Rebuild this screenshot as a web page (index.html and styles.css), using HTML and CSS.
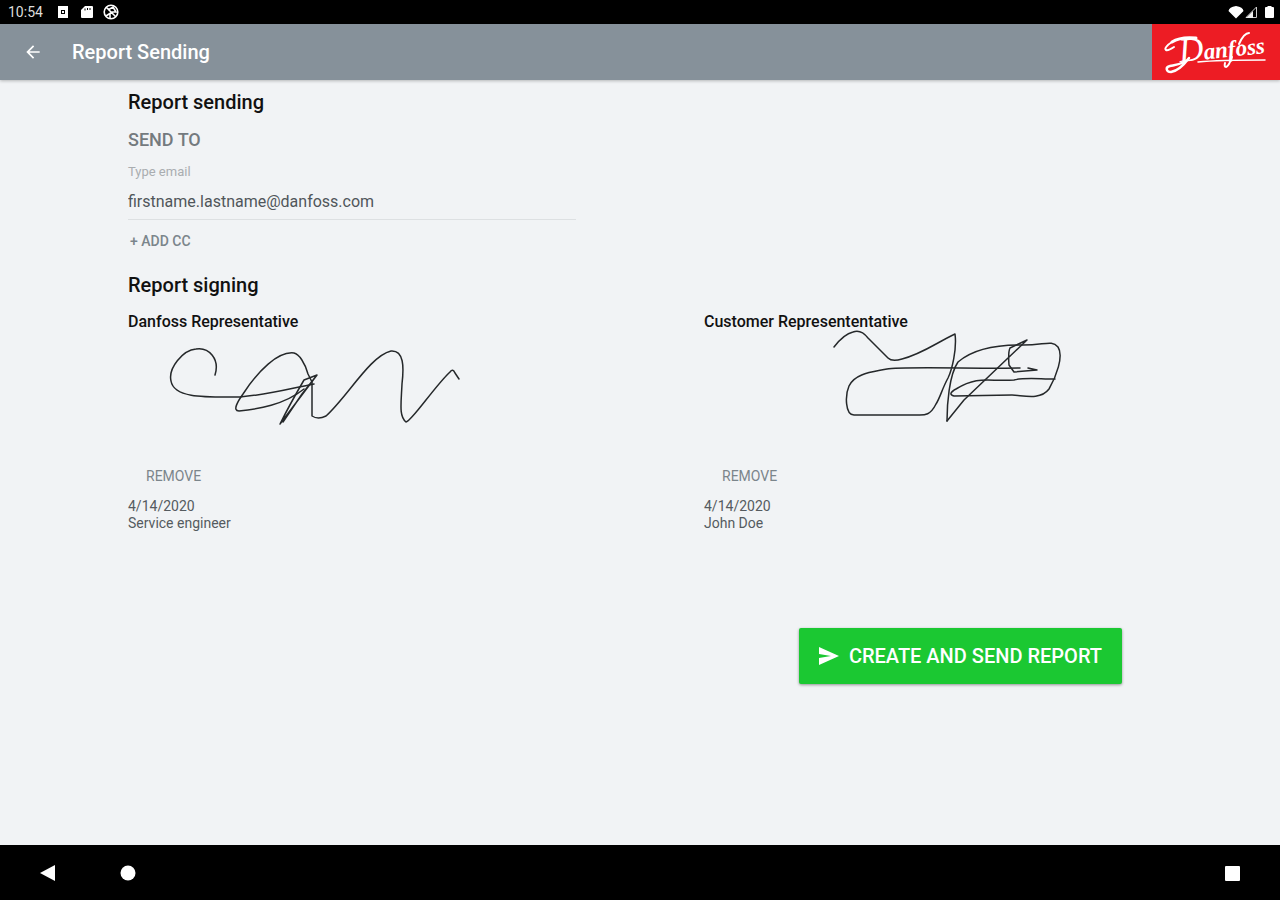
FILE: index.html
```html
<!DOCTYPE html>
<html lang="en">
<head>
<meta charset="utf-8">
<meta name="viewport" content="width=device-width, initial-scale=1">
<title>Report Sending</title>
<link rel="stylesheet" href="styles.css">
</head>
<body>
<div class="status-bar">
  <span class="clock">10:54</span>
  <svg class="status-icon" viewBox="0 0 16 16" aria-hidden="true"><path fill="#fff" fill-rule="evenodd" d="M3 2h10v12H3zM6 6v4h4V6z"/><path fill="#fff" d="M7 7h2v2H7z"/></svg>
  <svg class="status-icon" viewBox="0 0 16 16" aria-hidden="true"><path fill="#fff" fill-rule="evenodd" d="M6 2h7q1 0 1 1v10q0 1-1 1H3q-1 0-1-1V6zM5.500 4.500v2h1v-2zM8 4v2h1V4zM10.500 4v2h1V4z"/></svg>
  <svg class="status-icon" viewBox="0 0 16 16" aria-hidden="true"><g fill="none" stroke="#fff" stroke-width="1.600"><circle cx="8" cy="8" r="6.800"/><path d="M3 3l10 10M5 6l5-3 3 5-4 0-6 4M7 9v5"/></g></svg>
  <span class="spacer"></span>
  <svg class="signals" viewBox="0 0 48 16" aria-hidden="true"><path fill="#fff" d="M8 14.500L.5 7Q1 3 8 2q7 1 7.500 5zM38 3h1.500V2h4v1H45q1 0 1 1v9q0 1-1 1h-7q-1 0-1-1V4q0-1 1-1z"/><path fill="none" stroke="#ccc" d="M18 13.500L28.500 3v10.500z"/><path fill="#eee" d="M18 14l7-7v7z"/></svg>
</div>
<header class="app-bar">
  <button class="back" type="button" aria-label="Back"><svg viewBox="0 0 24 24" aria-hidden="true"><path fill="#fff" d="M20 11H7.830l5.590-5.590L12 4l-8 8 8 8 1.410-1.410L7.830 13H20z"/></svg></button>
  <h1 class="title">Report Sending</h1>
  <svg class="logo" viewBox="0 0 128 56" role="img" aria-label="Danfoss">
    <g fill="none" stroke="#fff" stroke-linecap="round">
      <path stroke-width="3" d="M20 18C26 14 34 13 44 14"/>
      <path stroke-width="2" d="M20 18c-5 3-8 7-6 8s5-1 8-3"/>
      <path stroke-width="2.500" d="M37 34C31 42 26 47 19 48c-5 0-6-5-1-6 5-1 8-1 14-4"/>
      <path stroke-width="1.500" d="M46 38c20-2 43-2 67-2"/>
      <path stroke-width="2" d="M97 9q-5 0-10 11M80 33q-3 9-6 10-2 0-1-4"/>
    </g>
    <text class="logo-text" x="28" y="38" transform="rotate(-6 28 38)"><tspan class="logo-initial">D</tspan>anfoss</text>
  </svg>
</header>
<main class="content">
  <section class="sending">
    <h2 class="heading">Report sending</h2>
    <h3 class="send-to">SEND TO</h3>
    <div class="columns">
      <div>
        <label class="field-label" for="email">Type email</label>
        <input class="field" id="email" type="email" value="firstname.lastname@danfoss.com">
        <button class="add-cc" type="button">+ ADD CC</button>
      </div>
    </div>
  </section>
  <section>
    <h2 class="heading">Report signing</h2>
    <div class="columns">
      <article>
        <h3 class="signer">Danfoss Representative</h3>
        <svg class="signature" viewBox="0 0 448 130" role="img" aria-label="Signature of Danfoss representative">
          <path d="M87 43C92 27 81 15 68 17C55 18 40 36 43 49C46 67 80 65 112 65C145 62 164 56 186 52"/>
          <path d="M176 57C156 73 130 77 111 79C104 79 110 69 115 62C130 39 150 19 166 21C171 22 177 31 180 42L184 50V84Q190 88 198 84C220 64 242 24 263 19C276 18 276 35 274 52C273 73 271 84 278 90C284 89 306 55 322 40Q325 36 327 41L331 47"/>
          <path d="M189 43L176 48Q162 72 152 92L189 43L174 62L155 90"/>
        </svg>
        <button class="remove" type="button">REMOVE</button>
        <p class="details">4/14/2020<br>Service engineer</p>
      </article>
      <article>
        <h3 class="signer">Customer Represententative</h3>
        <svg class="signature" viewBox="0 0 448 130" role="img" aria-label="Signature of customer representative">
          <path d="M130 15Q140 2 149 0Q157 -3 164 6L184 26Q188 30 198 27C218 22 232 11 251 2C253 17 248 38 244 46C238 57 236 66 232 72C226 84 220 83 214 83H150C141 83 141 63 145 54C151 41 169 40 183 37C196 34 278 37 316 36"/>
          <path d="M243 89C243 73 245 43 254 30C268 18 290 13 315 13C340 14 347 7 354 15C360 24 352 45 345 57C336 69 318 63 308 63L250 64Q243 62 252 57C275 43 285 50 310 48C320 45 335 47 351 47"/>
          <path d="M243 89L260 68L323 8L306 16Q304 20 305 33L310 40L333 38L324 36"/>
        </svg>
        <button class="remove" type="button">REMOVE</button>
        <p class="details">4/14/2020<br>John Doe</p>
      </article>
    </div>
  </section>
  <div class="actions">
    <button class="submit" type="button"><svg viewBox="0 0 20 20" aria-hidden="true"><path fill="#fff" d="M0 1l20 9-20 9v-7l12-2L0 8z"/></svg>CREATE AND SEND REPORT</button>
  </div>
</main>
<nav class="nav-bar" aria-label="System">
  <button type="button" aria-label="Back"><svg viewBox="0 0 16 16"><path fill="#fff" d="M0 8L15 0v16z"/></svg></button>
  <button type="button" aria-label="Home"><svg viewBox="0 0 16 16"><circle cx="8" cy="8" r="7.500" fill="#fff"/></svg></button>
  <span class="spacer"></span>
  <button type="button" aria-label="Recent apps"><svg viewBox="0 0 16 16"><rect x="1" y="1" width="15" height="15" rx="1" fill="#fff"/></svg></button>
</nav>
</body>
</html>
```
FILE: styles.css
```css
* { box-sizing: border-box; }
body {
  margin: 0;
  min-height: 100vh;
  display: flex;
  flex-direction: column;
  background: #f1f3f5;
  color: #111;
  font-family: Roboto, "Liberation Sans", sans-serif;
}
h1, h2, h3, p { margin: 0; font-weight: 500; }
button { padding: 0; border: 0; background: none; color: inherit; font: inherit; cursor: pointer; }
svg { display: block; flex: none; }
.spacer { flex: 1; }

.status-bar {
  height: 24px;
  padding: 0 4px 0 8px;
  display: flex;
  align-items: center;
  gap: 8px;
  background: #000;
  color: #ddd;
}
.clock { width: 39px; font-size: 14px; }
.status-icon { width: 16px; height: 16px; }
.signals { width: 48px; height: 16px; }

.app-bar {
  height: 56px;
  display: flex;
  align-items: center;
  background: #86919a;
  color: #fff;
  box-shadow: 0 1px 3px rgba(0, 0, 0, 0.25);
}
.back { width: 72px; padding-left: 23px; }
.back svg { width: 20px; height: 20px; }
.title { flex: 1; font-size: 20px; }
.logo { width: 128px; height: 56px; background: #ed1c24; }
.logo-text { fill: #fff; font: italic 700 23px "Liberation Serif", serif; }
.logo-initial { font-size: 34px; font-weight: 400; }

.content { flex: 1; padding: 8px 10% 0; }
.sending { margin-bottom: 21px; }
.heading { font-size: 20px; line-height: 28px; }
.columns { display: grid; grid-template-columns: 1fr 1fr; column-gap: 12.5%; }
.send-to { margin: 12px 0; font-size: 18px; line-height: 24px; color: #747a7e; }
.field-label { display: block; font-size: 13px; line-height: 16px; color: #a9adb0; }
.field {
  display: block;
  width: 100%;
  height: 40px;
  padding: 4px 0 0;
  border: 0;
  border-bottom: 1px solid #dde0e2;
  background: none;
  color: #50565a;
  font: 400 16px Roboto, "Liberation Sans", sans-serif;
}
.add-cc { display: block; margin-top: 12px; padding-left: 2px; font-size: 14px; font-weight: 500; line-height: 18px; color: #7b858b; }
.signer { margin-top: 13px; font-size: 16px; line-height: 20px; }
.signature { width: 100%; height: auto; overflow: visible; fill: none; stroke: #25282a; stroke-width: 1.500px; stroke-linejoin: round; stroke-linecap: round; }
.remove { display: block; margin-top: 4px; padding-left: 18px; font-size: 14px; line-height: 20px; color: #7b858b; }
.details { margin-top: 12px; font-size: 14px; font-weight: 400; line-height: 17px; color: #555b5f; }
.actions { display: flex; justify-content: flex-end; padding: 96px 30px 24px 0; }
.submit {
  display: flex;
  align-items: center;
  gap: 10px;
  height: 56px;
  padding: 0 20px;
  border-radius: 2px;
  background: #1bc832;
  color: #fff;
  font-size: 20px;
  font-weight: 500;
  box-shadow: 0 1px 3px rgba(0, 0, 0, 0.4);
}
.submit svg { width: 20px; height: 20px; }

.nav-bar { height: 55px; padding: 0 40px; display: flex; align-items: center; gap: 64px; background: #000; }
.nav-bar svg { width: 16px; height: 16px; }
```
